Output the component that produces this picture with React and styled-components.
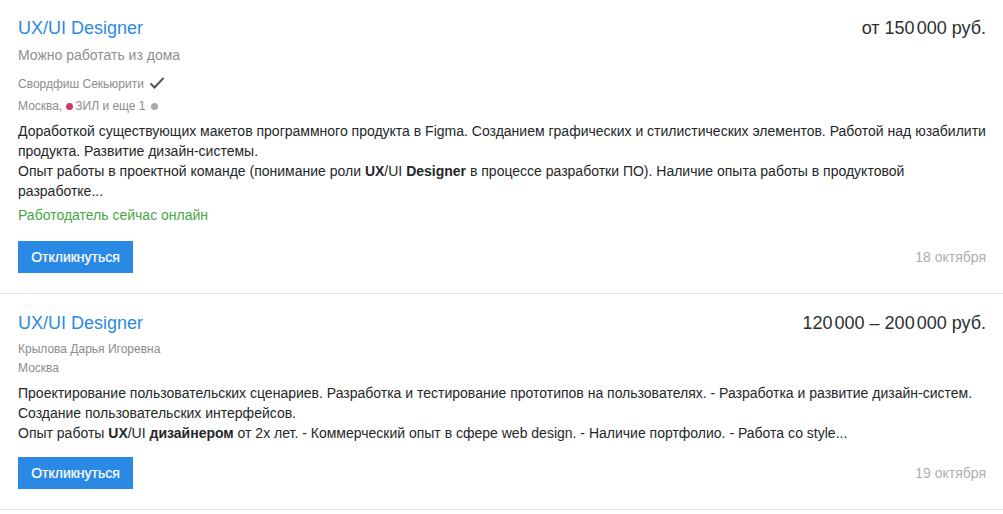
import React from 'react';
import styled, { createGlobalStyle } from 'styled-components';

//----------------------------------------
// Styled Components
//----------------------------------------

const GlobalStyle = createGlobalStyle`
  html, body {
    margin: 0;
    padding: 0;
    background: #fff;
  }
  body {
    font-family: "Liberation Sans", Arial, sans-serif;
    color: #232729;
  }
`;

const List = styled.div`
  width: 1003px;
  height: 514px;
  overflow: hidden;
`;

const Card = styled.div`
  height: ${({ $height }) => $height}px;
  box-sizing: border-box;
  padding: ${({ $top }) => $top}px 17px 0 18px;
  border-bottom: 1px solid #e3e3e3;
  display: flex;
  flex-direction: column;
`;

const Header = styled.div`
  display: flex;
  justify-content: space-between;
  align-items: flex-start;
  height: 20px;
`;

const Title = styled.a`
  font-size: 18px;
  line-height: 20px;
  color: #2d8ae0;
  text-decoration: none;
`;

const Salary = styled.div`
  font-size: 18px;
  line-height: 20px;
  color: #2c2f31;
`;

const ThinGap = styled.span`
  display: inline-block;
  width: 2px;
`;

const Remote = styled.div`
  margin-top: 7px;
  font-size: 14px;
  line-height: 20px;
  color: #8f8f8f;
`;

const Meta = styled.div`
  display: flex;
  align-items: center;
  margin-top: ${({ $top }) => $top}px;
  font-size: 12px;
  line-height: 18px;
  color: #8c8c8c;
`;

const Check = styled.svg`
  width: 16px;
  height: 14px;
  margin-left: 5px;
  margin-top: -3px;
`;

const Dot = styled.span`
  width: 7px;
  height: 7px;
  border-radius: 50%;
  background: ${({ $color }) => $color};
  margin: ${({ $margin }) => $margin};
`;

const Description = styled.div`
  margin-top: ${({ $top }) => $top}px;
  font-size: 14px;
  line-height: 20px;
  color: #232729;
  b {
    font-weight: 700;
  }
`;

const Online = styled.div`
  margin-top: 4px;
  font-size: 14px;
  line-height: 20px;
  color: #48a648;
`;

const Footer = styled.div`
  display: flex;
  justify-content: space-between;
  align-items: center;
  margin-top: ${({ $top }) => $top}px;
`;

const ApplyButton = styled.button`
  width: 115px;
  height: 32px;
  padding: 0;
  border: none;
  background: #2b89e6;
  color: #fff;
  font-family: "Liberation Sans", Arial, sans-serif;
  font-size: 14px;
  font-weight: 400;
  -webkit-text-stroke: 0.2px #fff;
`;

const DateLabel = styled.span`
  font-size: 14px;
  color: #b0b0b0;
`;

//----------------------------------------
// React Component
//----------------------------------------

const App = () => (
  <List>
    <GlobalStyle />
    <Card $height={294} $top={18}>
      <Header>
        <Title>UX/UI Designer</Title>
        <Salary>от 150<ThinGap />000 руб.</Salary>
      </Header>
      <Remote>Можно работать из дома</Remote>
      <Meta $top={10}>
        Свордфиш Секьюрити
        <Check viewBox="0 0 16 14">
          <path d="M1.5 7.5 L5.5 11.5 L14.5 2" fill="none" stroke="#555" strokeWidth="2" />
        </Check>
      </Meta>
      <Meta $top={4}>
        Москва,
        <Dot $color="#d0395f" $margin="0 2px 0 4px" />
        ЗИЛ и еще 1
        <Dot $color="#a8a8a8" $margin="0 0 0 5px" />
      </Meta>
      <Description $top={6}>
        Доработкой существующих макетов программного продукта в Figma. Созданием графических и стилистических элементов. Работой над юзабилити продукта. Развитие дизайн-системы.
        <br />
        Опыт работы в проектной команде (понимание роли <b>UX</b>/UI <b>Designer</b> в процессе разработки ПО). Наличие опыта работы в продуктовой разработке...
      </Description>
      <Online>Работодатель сейчас онлайн</Online>
      <Footer $top={16}>
        <ApplyButton>Откликнуться</ApplyButton>
        <DateLabel>18 октября</DateLabel>
      </Footer>
    </Card>
    <Card $height={216} $top={19}>
      <Header>
        <Title>UX/UI Designer</Title>
        <Salary>120<ThinGap />000 – 200<ThinGap />000 руб.</Salary>
      </Header>
      <Meta $top={7}>Крылова Дарья Игоревна</Meta>
      <Meta $top={1}>Москва</Meta>
      <Description $top={6}>
        Проектирование пользовательских сценариев. Разработка и тестирование прототипов на пользователях. - Разработка и развитие дизайн-систем. Создание пользовательских интерфейсов.
        <br />
        Опыт работы <b>UX</b>/UI <b>дизайнером</b> от 2х лет. - Коммерческий опыт в сфере web design. - Наличие портфолио. - Работа со style...
      </Description>
      <Footer $top={14}>
        <ApplyButton>Откликнуться</ApplyButton>
        <DateLabel>19 октября</DateLabel>
      </Footer>
    </Card>
  </List>
);

export default App;
